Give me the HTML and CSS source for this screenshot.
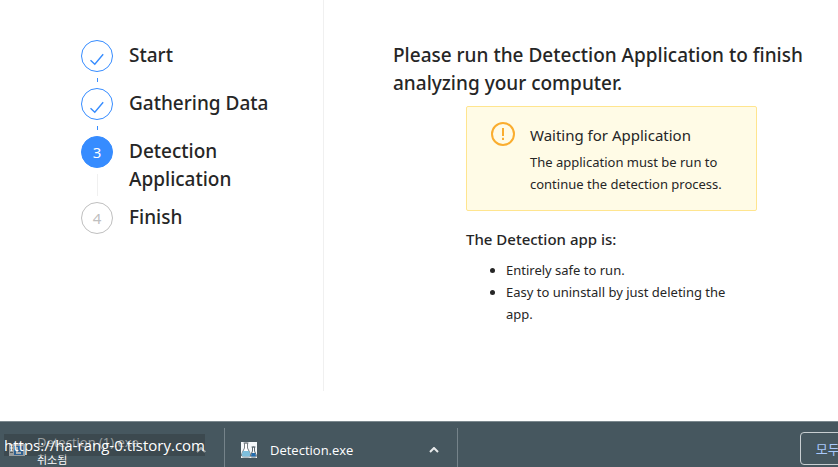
FILE: index.html
```html
<!DOCTYPE html>
<html lang="en">
<head>
  <meta charset="UTF-8">
  <meta name="viewport" content="width=device-width, initial-scale=1.0">
  <title>Detection</title>
  <link rel="stylesheet" href="styles.css">
</head>
<body>
  <main>
    <aside>
      <ol class="steps">
        <li class="step done">
          <div class="step-track">
            <span class="step-icon">
              <svg viewBox="0 0 16 16" width="16" height="16"><path d="M1.500 9.200 5.800 13.300 14.200 3.200"/></svg>
            </span>
          </div>
          <div class="step-title">Start</div>
        </li>
        <li class="step done">
          <div class="step-track">
            <span class="step-icon">
              <svg viewBox="0 0 16 16" width="16" height="16"><path d="M1.500 9.200 5.800 13.300 14.200 3.200"/></svg>
            </span>
          </div>
          <div class="step-title">Gathering Data</div>
        </li>
        <li class="step active">
          <div class="step-track"><span class="step-icon">3</span></div>
          <div class="step-title">Detection Application</div>
        </li>
        <li class="step">
          <div class="step-track"><span class="step-icon">4</span></div>
          <div class="step-title">Finish</div>
        </li>
      </ol>
    </aside>

    <section class="content">
      <h1>Please run the Detection Application to finish analyzing your computer.</h1>
      <div class="details">
        <div class="alert">
          <svg class="alert-icon" viewBox="0 0 24 24" width="24" height="24">
            <circle cx="12" cy="11" r="11"/>
            <path d="M12 5v8"/>
            <path d="M12 14.800v2.200"/>
          </svg>
          <div>
            <div class="alert-title">Waiting for Application</div>
            <p>The application must be run to continue the detection process.</p>
          </div>
        </div>
        <h2>The Detection app is:</h2>
        <ul>
          <li>Entirely safe to run.</li>
          <li>Easy to uninstall by just deleting the app.</li>
        </ul>
      </div>
    </section>
  </main>

  <footer class="downloads">
    <div class="download canceled">
      <svg class="file-icon" viewBox="0 0 16 16" width="16" height="16">
        <path fill="#dfe3e5" d="M0 2h16v12H0z"/>
        <path fill="#6c777d" d="M1 4h3v1H1zM1 7h3v1H1zM1 10h3v1H1z"/>
        <path fill="#2f7fd0" d="M5 4h9v9H5z"/>
        <path fill="#fff" d="M7 5h2v5h3v2H7z"/>
      </svg>
      <div class="file-text">
        <div class="file-name">Detection (1).exe</div>
        <div class="file-status" lang="ko">취소됨</div>
      </div>
      <button class="menu" aria-label="More options">
        <svg viewBox="0 0 10 6" width="10" height="6"><path d="M1 5 5 1 9 5"/></svg>
      </button>
      <span class="watermark">https://ha-rang-0.tistory.com</span>
    </div>
    <div class="download">
      <svg class="file-icon" viewBox="0 0 16 16" width="16" height="16">
        <path fill="#f4f8fa" d="M0 0h16v16H0z"/>
        <path fill="#fff" stroke="#777f84" d="M3.500 1v5L.8 11.500c-1 2 0 3.500 1.700 3.500h5c1.700 0 2.700-1.500 1.700-3.500L6.500 6V1zM2.500 1h5"/>
        <path fill="#7ebfdc" d="M2 9h6l1.200 3c.5 1.500-.2 2.500-1.500 2.500H2.400C1 14.500.5 13.500 1 12z"/>
        <path fill="#fff" stroke="#5b6870" d="M11.500 5v4L9.800 13c-.5 1.200 0 2 1 2h3.400c1 0 1.500-.8 1-2l-1.700-4V5zM10.500 5h4"/>
        <path fill="#246eb0" d="M11 11h3l1 2.500-.5 1h-4l-.5-1z"/>
      </svg>
      <div class="file-text">
        <div class="file-name">Detection.exe</div>
      </div>
      <button class="menu" aria-label="More options">
        <svg viewBox="0 0 10 6" width="10" height="6"><path d="M1 5 5 1 9 5"/></svg>
      </button>
    </div>
    <button class="show-all" lang="ko">모두 표시</button>
  </footer>
</body>
</html>
```

FILE: styles.css
```css
:root {
  --primary: #368cff;
  --text: #262626;
  --muted: #bfbfbf;
  --shelf: #46575f;
  --shelf-line: #75838a;
}

* {
  margin: 0;
  padding: 0;
  box-sizing: border-box;
}

body {
  display: flex;
  flex-direction: column;
  min-height: 100vh;
  font-family: 'Segoe UI', 'Noto Sans', 'Noto Sans CJK KR', sans-serif;
  font-size: 13px;
  line-height: 22px;
  color: var(--text);
  background: #fff;
  overflow-x: hidden;
}

main {
  flex: 1;
  display: flex;
  margin-bottom: 30px;
}

aside {
  flex: none;
  width: 324px;
  padding: 40px 40px 0 81px;
  border-right: 1px solid #f0f0f0;
}

/* Steps */
.steps {
  list-style: none;
}

.step {
  display: flex;
  gap: 16px;
  min-height: 48px;
}

.step-track {
  display: flex;
  flex-direction: column;
  align-items: center;
}

.step-icon {
  display: flex;
  align-items: center;
  justify-content: center;
  width: 32px;
  height: 32px;
  border: 1px solid var(--muted);
  border-radius: 50%;
  font-size: 15px;
  color: var(--muted);
}

.step-icon svg {
  margin-top: 6px;
  fill: none;
  stroke: var(--primary);
  stroke-width: 1.4;
}

.step-track::after {
  content: '';
  flex: 1;
  width: 1px;
  margin: 6px 0;
  background: #f0f0f0;
}

.step:last-child .step-track::after {
  display: none;
}

.done .step-icon {
  border-color: var(--primary);
}

.done .step-track::after {
  background: var(--primary);
}

.active .step-icon {
  border-color: var(--primary);
  background: var(--primary);
  color: #fff;
}

.step-title {
  padding: 1px 0 9px;
  font-size: 19px;
  font-weight: 500;
  line-height: 28px;
}

/* Content */
.content {
  flex: 1;
  padding: 41px 8px 0 69px;
}

h1 {
  font-size: 19px;
  font-weight: 500;
  line-height: 28px;
}

.details {
  width: 66.6%;
  margin: 9px auto 0;
}

.alert {
  display: flex;
  gap: 15px;
  padding: 16px 24px 15px;
  border: 1px solid #ffe58f;
  border-radius: 2px;
  background: #fffbe6;
}

.alert-icon {
  flex: none;
  fill: none;
  stroke: #faad2f;
  stroke-width: 2;
  overflow: visible;
}

.alert-title {
  margin-bottom: 4px;
  font-size: 15px;
  line-height: 24px;
}

h2 {
  margin: 16px 0 8px;
  font-size: 15px;
  font-weight: 500;
  line-height: 24px;
}

ul {
  padding: 0 16px 0 40px;
}

/* Downloads bar */
.downloads {
  display: flex;
  height: 46px;
  padding-top: 6px;
  border-top: 1px solid #7b888e;
  background: var(--shelf);
  overflow: hidden;
}

.download {
  position: relative;
  flex: none;
  display: flex;
  align-items: center;
  width: 233px;
  padding: 4px 18px 0 16px;
  border-right: 1px solid var(--shelf-line);
  color: #fff;
}

.download.canceled {
  width: 225px;
  padding-left: 9px;
}

.file-icon {
  flex: none;
}

.file-text {
  flex: 1;
  margin-left: 13px;
  font-family: 'Segoe UI', 'Open Sans', 'Noto Sans CJK KR', sans-serif;
  line-height: 20px;
}

.canceled .file-text {
  margin-left: 12px;
}

.canceled .file-name {
  color: #e3e8ea;
}

.file-status {
  font-size: 11px;
  line-height: 16px;
}

.menu {
  display: flex;
  border: none;
  background: none;
  cursor: pointer;
}

.menu svg {
  fill: none;
  stroke: #e8eaeb;
  stroke-width: 2;
}

.watermark {
  position: absolute;
  left: 4px;
  top: 6px;
  font-family: 'Segoe UI', 'Open Sans', sans-serif;
  font-size: 15px;
  line-height: 22px;
  white-space: nowrap;
  background: rgba(45, 52, 56, 0.4);
}

.show-all {
  flex: none;
  height: 33px;
  margin: 4px -45px 0 auto;
  padding: 0 15px;
  border: 1px solid #c8ced1;
  border-radius: 4px;
  background: none;
  color: #a9c9fb;
  font-family: inherit;
  font-size: 13px;
  cursor: pointer;
}
```
